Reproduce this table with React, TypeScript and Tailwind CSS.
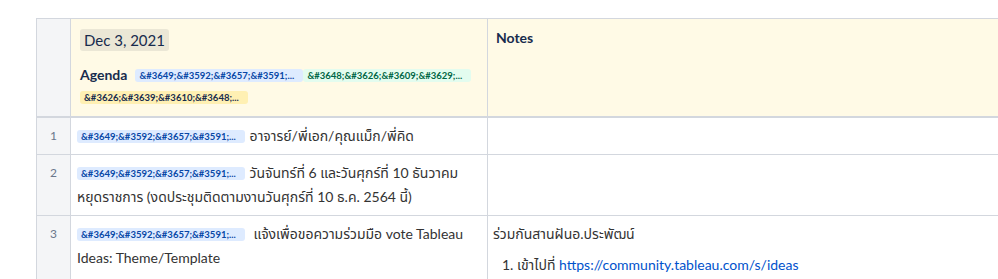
import React from 'react';

const FONT = 'Lato, "Noto Sans Thai", "Noto Sans", sans-serif';

type Tone = 'blue' | 'green' | 'yellow';

const toneClass: Record<Tone, string> = {
  blue: 'bg-[#deebff] text-[#0747a6]',
  green: 'bg-[#e3fcef] text-[#006644]',
  yellow: 'bg-[#fff0b3] text-[#172b4d]',
};

function Status({ tone, label }: { tone: Tone; label: string }) {
  return (
    <span
      className={`inline-block h-[13px] w-[168px] overflow-hidden whitespace-nowrap rounded-[3px] px-[4px] align-[-2px] text-[9.5px] font-bold leading-[13px] ${toneClass[tone]}`}
    >
      {label}
    </span>
  );
}

// status labels are literal escaped entities, as in the page
const PEND = '&#3649;&#3592;&#3657;&#3591;...';
const PROPOSE = '&#3648;&#3626;&#3609;&#3629;...';
const CONT = '&#3626;&#3639;&#3610;&#3648;...';

const rows = [
  {
    n: 1,
    agenda: (
      <>
        <Status tone="blue" label={PEND} /> <span className="ml-[1px]">อาจารย์/พี่เอก/คุณแม็ก/พี่คิด</span>
      </>
    ),
    notes: null,
  },
  {
    n: 2,
    agenda: (
      <>
        <Status tone="blue" label={PEND} /> <span className="ml-[1px]">วันจันทร์ที่ 6 และวันศุกร์ที่ 10 ธันวาคม</span>
        <br />
        หยุดราชการ (งดประชุมติดตามงานวันศุกร์ที่ 10 ธ.ค. 2564 นี้)
      </>
    ),
    notes: null,
  },
  {
    n: 3,
    agenda: (
      <>
        <Status tone="blue" label={PEND} /> <span className="ml-[5px]">แจ้งเพื่อขอความร่วมมือ vote Tableau</span>
        <br />
        Ideas: Theme/Template
      </>
    ),
    notes: (
      <>
        <p>ร่วมกันสานฝันอ.ประพัฒน์</p>
        <ol className="mt-[7px] list-decimal pl-[24px]">
          <li>
            เข้าไปที่{' '}
            <a className="text-[#0052cc]" href="#">
              https://community.tableau.com/s/ideas
            </a>
          </li>
        </ol>
      </>
    ),
  },
];

export default function App() {
  return (
    <div className="h-[279px] w-[998px] overflow-hidden bg-white pl-[36px] pt-[18px]" style={{ fontFamily: FONT }}>
      <table className="w-[1100px] table-fixed border-collapse text-[14px] text-[#172b4d]">
        <colgroup>
          <col className="w-[34px]" />
          <col className="w-[417px]" />
          <col />
        </colgroup>
        <thead>
          <tr className="h-[98px] align-top">
            <th className="border border-b-2 border-[#d3d7de] bg-[#f4f5f7]" />
            <th className="border border-b-2 border-[#d3d7de] bg-[#fffae6] px-[9px] pt-[10px] text-left font-normal">
              <span className="inline-block rounded-[3px] bg-[#ebe7d6] px-[4px] text-[15px] leading-[22px]">
                Dec 3, 2021
              </span>
              <div className="mt-[17px] flex flex-wrap items-center gap-y-[9px] leading-[14px]">
                <span className="mr-[8px] text-[14px] font-bold">Agenda</span>
                <Status tone="blue" label={PEND} />
                <Status tone="green" label={PROPOSE} />
                <Status tone="yellow" label={CONT} />
              </div>
            </th>
            <th className="border border-b-2 border-[#d3d7de] bg-[#fffae6] px-[8px] pt-[10px] text-left text-[14px] font-bold leading-[18px]">
              Notes
            </th>
          </tr>
        </thead>
        <tbody>
          {rows.map((row) => (
            <tr key={row.n} className="align-top">
              <td className="border border-[#d3d7de] bg-[#f4f5f7] py-[6px] text-center text-[12px] leading-[24px] text-[#6b778c]">
                {row.n}
              </td>
              <td className="border border-[#d3d7de] px-[6px] py-[6px] leading-[24px] text-[#333]">{row.agenda}</td>
              <td className="border border-[#d3d7de] px-[5px] py-[6px] leading-[24px] text-[#333]">{row.notes}</td>
            </tr>
          ))}
        </tbody>
      </table>
    </div>
  );
}
